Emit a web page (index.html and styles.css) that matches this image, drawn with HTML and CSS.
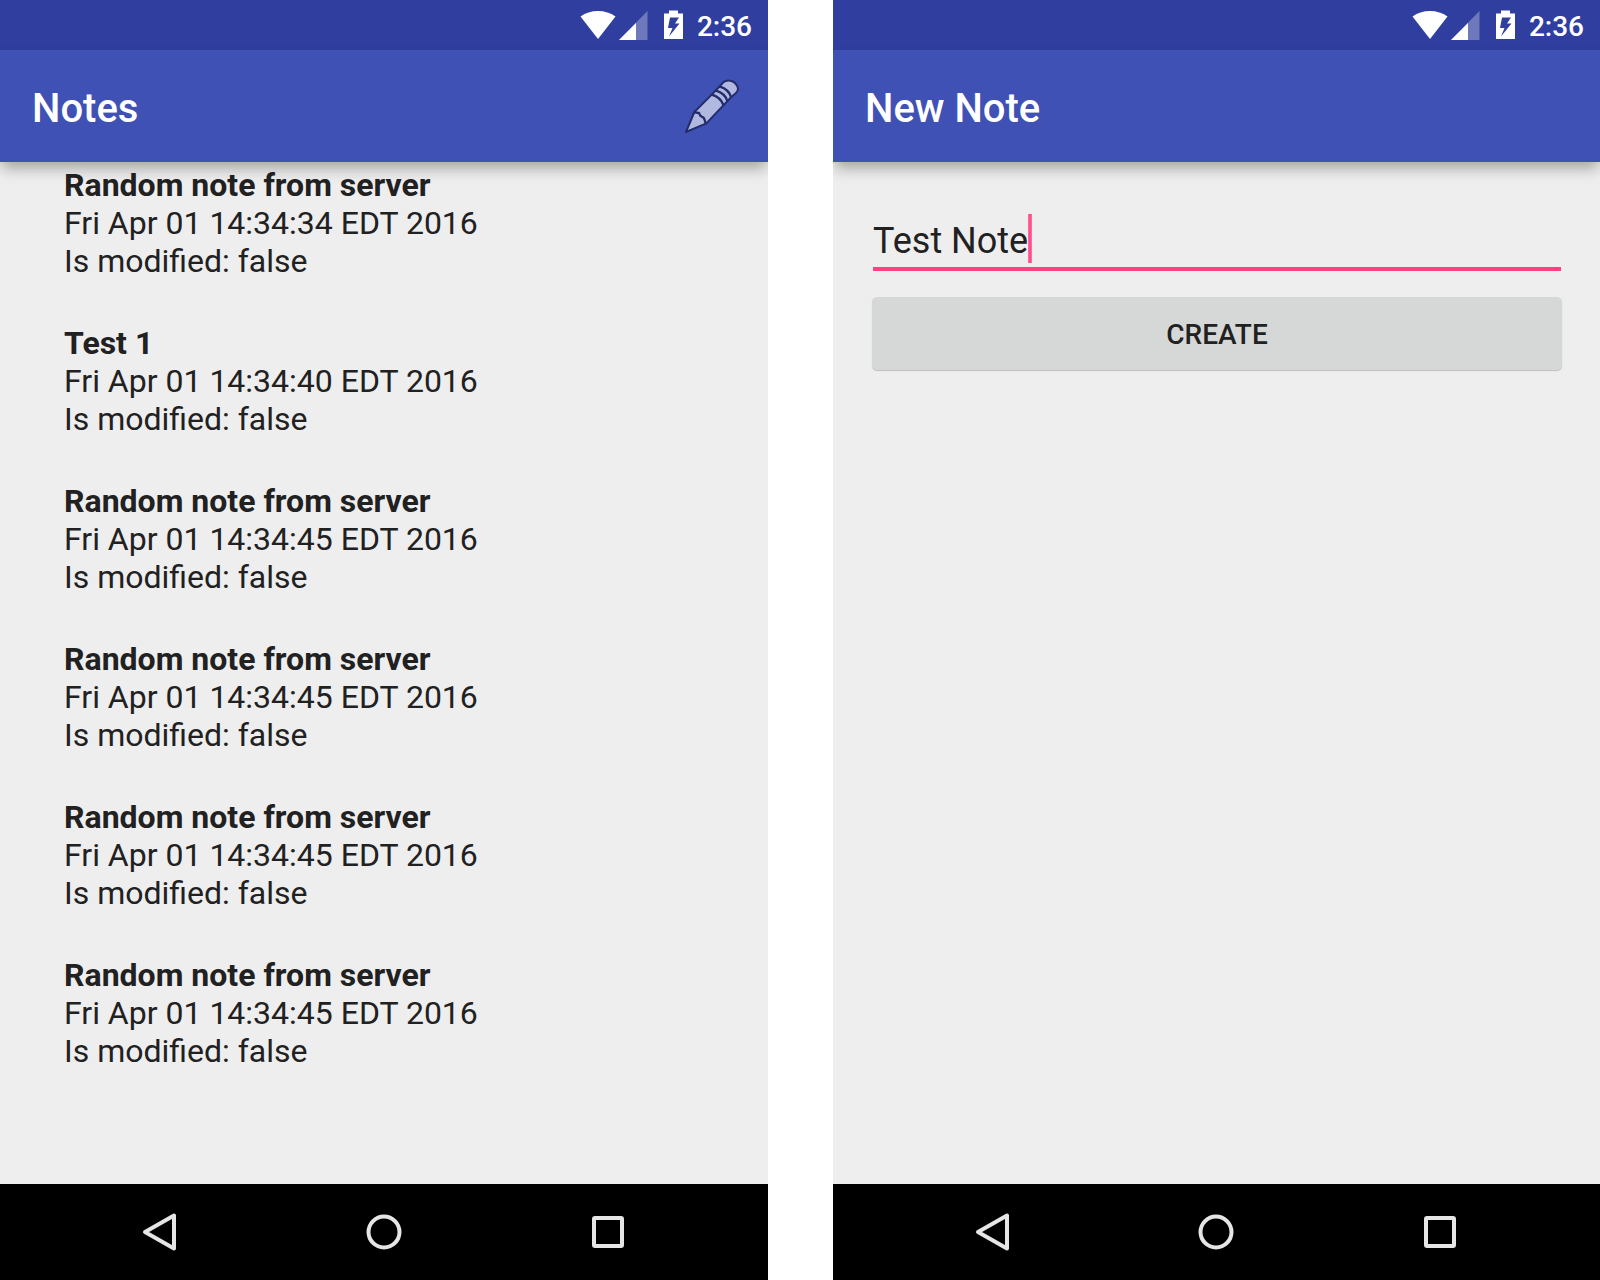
FILE: index.html
```html
<!DOCTYPE html>
<html lang="en">
<head>
<meta charset="utf-8">
<meta name="viewport" content="width=device-width, initial-scale=1">
<title>Notes</title>
<link rel="stylesheet" href="styles.css">
</head>
<body>
<svg class="sprite" aria-hidden="true">
  <symbol id="wifi" viewBox="0 0 36 30"><path d="M.5 6.500Q8 1 18 1T35.500 6.500L18 29z" fill="#fff"/></symbol>
  <symbol id="signal" viewBox="0 0 30 30"><path d="M1 30 29.500 1V30z" fill="#fff" fill-opacity=".3"/><path d="M1 30 18 13V30z" fill="#fff"/></symbol>
  <symbol id="battery" viewBox="0 0 20 30"><path fill="#fff" fill-rule="evenodd" d="M5 .5h9v3h5v25.500H0V3.500h5zM6 7.500 4 18h4.500L5 26.500 15.500 13.500h-4.500l4-6z"/></symbol>
  <symbol id="back" viewBox="0 0 40 40"><path d="M5 20 34 3.500v33z" fill="none" stroke="#e6e6e6" stroke-width="4" stroke-linejoin="round"/></symbol>
  <symbol id="home" viewBox="0 0 40 40"><circle cx="20" cy="20" r="15.500" fill="none" stroke="#e6e6e6" stroke-width="4"/></symbol>
  <symbol id="recent" viewBox="0 0 40 40"><rect x="6" y="6" width="28" height="28" rx="1" fill="none" stroke="#e6e6e6" stroke-width="4"/></symbol>
</svg>
<main class="screens">
  <section class="phone">
    <div class="status">
      <svg class="wifi"><use href="#wifi"/></svg>
      <svg class="signal"><use href="#signal"/></svg>
      <svg class="battery"><use href="#battery"/></svg>
      <span>2:36</span>
    </div>
    <header class="toolbar">
      <h1>Notes</h1>
      <button class="action" type="button" aria-label="New note">
        <svg viewBox="45 55 162 162" fill="#b2b9e1" stroke="#232d6c" stroke-width="6" stroke-linejoin="round" stroke-linecap="round">
          <path d="M48 214 73 154 126 101 150 76 160 65Q170 56 185 61 202 69 204 84 204 91 197 98L184 109 160 134 109 188z"/>
          <path d="M74 155 87 157 91 165 101 171 104 178 107 188" fill="none" stroke-width="7"/>
          <path d="M125 102Q151 109 160 133M138 90Q165 98 172 121M150 78Q176 86 183 109" fill="none" stroke-width="7"/>
        </svg>
      </button>
    </header>
    <ul class="notes">
      <li><h2>Random note from server</h2><p>Fri Apr 01 14:34:34 EDT 2016</p><p>Is modified: false</p></li>
      <li><h2>Test 1</h2><p>Fri Apr 01 14:34:40 EDT 2016</p><p>Is modified: false</p></li>
      <li><h2>Random note from server</h2><p>Fri Apr 01 14:34:45 EDT 2016</p><p>Is modified: false</p></li>
      <li><h2>Random note from server</h2><p>Fri Apr 01 14:34:45 EDT 2016</p><p>Is modified: false</p></li>
      <li><h2>Random note from server</h2><p>Fri Apr 01 14:34:45 EDT 2016</p><p>Is modified: false</p></li>
      <li><h2>Random note from server</h2><p>Fri Apr 01 14:34:45 EDT 2016</p><p>Is modified: false</p></li>
    </ul>
    <nav class="navbar">
      <button type="button" aria-label="Back"><svg><use href="#back"/></svg></button>
      <button type="button" aria-label="Home"><svg><use href="#home"/></svg></button>
      <button type="button" aria-label="Recent apps"><svg><use href="#recent"/></svg></button>
    </nav>
  </section>
  <section class="phone">
    <div class="status">
      <svg class="wifi"><use href="#wifi"/></svg>
      <svg class="signal"><use href="#signal"/></svg>
      <svg class="battery"><use href="#battery"/></svg>
      <span>2:36</span>
    </div>
    <header class="toolbar">
      <h1>New Note</h1>
    </header>
    <form class="form">
      <div class="field">
        <input type="text" value="Test Note" aria-label="Note text">
        <span class="caret"></span>
      </div>
      <button class="create" type="button">CREATE</button>
    </form>
    <nav class="navbar">
      <button type="button" aria-label="Back"><svg><use href="#back"/></svg></button>
      <button type="button" aria-label="Home"><svg><use href="#home"/></svg></button>
      <button type="button" aria-label="Recent apps"><svg><use href="#recent"/></svg></button>
    </nav>
  </section>
</main>
</body>
</html>
```
FILE: styles.css
```css
* { box-sizing: border-box; margin: 0; padding: 0; }
body { background: #fff; color: #212121; font-family: Roboto, sans-serif; }
button { border: 0; background: none; font: inherit; color: inherit; }
svg { display: block; }
.sprite { position: absolute; width: 0; height: 0; }

.screens {
  display: grid;
  grid-template-columns: 768fr 767fr;
  gap: 65px;
  min-height: 100vh;
}
.phone {
  display: flex;
  flex-direction: column;
  background: #eee;
  overflow: hidden;
}

.status {
  display: flex;
  align-items: center;
  justify-content: flex-end;
  height: 50px;
  padding-right: 16px;
  background: #303f9f;
  color: #fff;
  font-size: 28px;
  font-weight: 500;
  line-height: 32px;
}
.wifi { width: 36px; height: 30px; margin-right: 2px; }
.signal { width: 30px; height: 30px; margin-right: 16px; }
.battery { width: 20px; height: 30px; margin-right: 13px; }
.status span { padding-top: 3px; }

.toolbar {
  position: relative;
  display: flex;
  align-items: center;
  justify-content: space-between;
  height: 112px;
  padding: 0 29px 0 32px;
  background: #3f51b5;
  color: #fff;
  box-shadow: 0 8px 14px -2px rgba(0, 0, 0, .32);
}
.toolbar h1 { padding-top: 6px; font-size: 40px; font-weight: 500; line-height: 48px; }
.action svg { width: 54px; height: 54px; }

.notes {
  flex: 1;
  display: flex;
  flex-direction: column;
  gap: 44px;
  padding: 4px 64px;
  list-style: none;
  font-size: 32px;
  line-height: 38px;
}
.notes h2 { font-size: 32px; font-weight: 700; }

.form { flex: 1; padding: 48px 38px 0 39px; }
.field { position: relative; padding: 0 1px; }
.field input {
  display: block;
  width: 100%;
  height: 61px;
  padding-top: 4px;
  border: 0;
  border-bottom: 4px solid #ff4081;
  outline: 0;
  background: none;
  color: #212121;
  font: 400 36px/44px Roboto, sans-serif;
}
.caret {
  position: absolute;
  left: 156px;
  top: 4px;
  width: 4px;
  height: 49px;
  background: linear-gradient(90deg, #ff79a7, #ff4081 50%, #ff79a7);
}
.create {
  display: block;
  width: 100%;
  height: 73px;
  margin-top: 26px;
  padding-top: 2px;
  border-radius: 5px;
  background: #d6d8d7;
  box-shadow: 0 1px 1px rgba(0, 0, 0, .2);
  font-size: 28px;
  font-weight: 500;
}

.navbar {
  display: grid;
  grid-template-columns: repeat(3, 1fr);
  height: 96px;
  padding: 0 48px;
  background: #000;
}
.navbar button { display: flex; align-items: center; justify-content: center; }
.navbar svg { width: 40px; height: 40px; }
```
